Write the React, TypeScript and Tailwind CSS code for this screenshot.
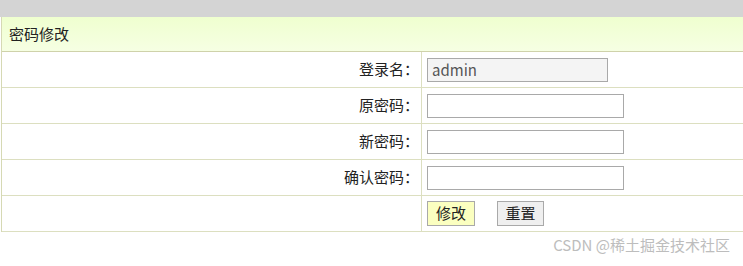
import React from "react";

const font = { fontFamily: '"Noto Sans CJK SC", "Liberation Sans", sans-serif' };

const rows = [
	{ label: "登录名：", value: "admin", readOnly: true },
	{ label: "原密码：", value: "", readOnly: false },
	{ label: "新密码：", value: "", readOnly: false },
	{ label: "确认密码：", value: "", readOnly: false },
];

export default function App() {
	return (
		<div
			className="w-[743px] h-[266px] overflow-hidden bg-white text-[15px] text-[#222]"
			style={font}
		>
			{/* top bar */}
			<div className="h-[17px] bg-[#d4d4d4]" />

			<div className="ml-px w-[800px] border-l border-[#d6d9b4]">
				{/* header */}
				<div className="flex h-[35px] items-center border-b border-[#cfd2aa] bg-gradient-to-b from-[#efffcf] to-[#f6ffe3] pl-[7px]">
					密码修改
				</div>

				{rows.map((row) => (
					<div key={row.label} className="flex h-[36px] border-b border-[#dcdfc0]">
						<div className="flex w-[420px] items-center justify-end border-r border-[#dcdfc0] pr-[2px]">
							{row.label}
						</div>
						<div className="flex items-center pl-[5px]">
							<input
								type={row.readOnly ? "text" : "password"}
								readOnly={row.readOnly}
								defaultValue={row.value}
								className={
									row.readOnly
										? "h-[24px] w-[181px] border border-[#a9a9a9] bg-[#f4f4f4] px-[4px] text-[15px] text-[#555] outline-none"
										: "h-[24px] w-[197px] border border-[#a9a9a9] bg-white px-[4px] text-[15px] outline-none"
								}
								style={font}
							/>
						</div>
					</div>
				))}

				{/* buttons */}
				<div className="flex h-[36px] border-b border-[#dcdfc0]">
					<div className="w-[420px] border-r border-[#dcdfc0]" />
					<div className="flex items-center gap-[22px] pl-[5px]">
						<button
							type="button"
							className="h-[25px] w-[48px] border border-[#a9a9a9] bg-[#fbffc0] text-[15px] text-[#222]"
						>
							修改
						</button>
						<button
							type="button"
							className="h-[25px] w-[47px] border border-[#a9a9a9] bg-[#efefef] text-[15px] text-[#222]"
						>
							重置
						</button>
					</div>
				</div>
			</div>

			<div className="flex justify-end pr-[13px] pt-[2px] text-[15px] text-[#bdbdbd]">
				CSDN @稀土掘金技术社区
			</div>
		</div>
	);
}
